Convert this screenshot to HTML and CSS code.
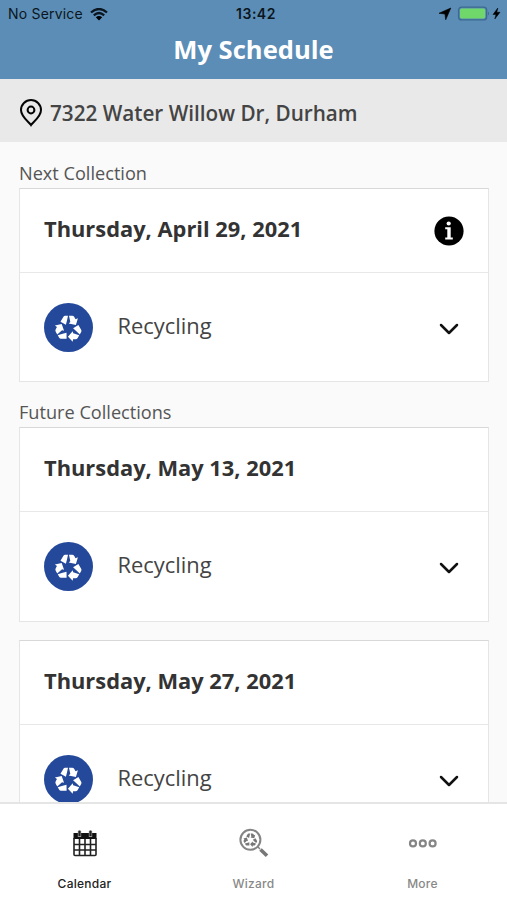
FILE: index.html
```html
<!DOCTYPE html>
<html lang="en">
<head>
<meta charset="utf-8">
<title>My Schedule</title>
<link rel="stylesheet" href="styles.css">
</head>
<body>
<svg class="defs" aria-hidden="true">
  <defs>
    <g id="arrow"><path d="M-8-5.8-5.2-10.6Q-4.6-11.7-3.4-11.7H-.5L-1.4-7.6-2.6-2.8Z"/><path d="M.5-11.7H3.6Q5-11.7 5.8-10.4L7-8.3 9.4-9.3 7.4-2.6 .2-4 1.8-5.4Z"/></g>
    <g id="recycle"><use href="#arrow"/><use href="#arrow" transform="rotate(120 0 1)"/><use href="#arrow" transform="rotate(240 0 1)"/></g>
  </defs>
</svg>
<div class="app">
  <header class="header">
    <div class="status">
      <div class="carrier"><span>No Service</span>
        <svg width="18" height="13" viewBox="0 0 18 13"><path d="M1 4.5Q9-2.5 17 4.5M3.8 7.3Q9 2.8 14.2 7.3" fill="none" stroke="#0b1620" stroke-width="2.3"/><path d="M5.8 9.3Q9 6.7 12.2 9.3L9 12.5Z"/></svg>
      </div>
      <div class="time">13:42</div>
      <div class="power">
        <svg width="62" height="16" viewBox="0 0 62 16"><path d="M0 7.3 11.8 2 6.7 13.8 6 8Z" stroke="#000" stroke-width=".6"/><rect x="19.6" y="1.1" width="28" height="12.8" rx="3" fill="none" stroke="#3d688f" stroke-width="1.3"/><rect x="21" y="2.5" width="25.2" height="10" rx="1.7" fill="#70d86b"/><path d="M49 5.5q2 2 0 4z" fill="#3d688f"/><path d="M58.8 2 54 8.5H57L55.8 13 61 6.3H57.8Z" stroke="#000" stroke-width=".5"/></svg>
      </div>
    </div>
    <h1>My Schedule</h1>
  </header>
  <div class="address">
    <svg width="24" height="28" viewBox="0 0 24 28" fill="none" stroke="#050505" stroke-width="2"><path d="M12 26C10.5 23.5 2 18 2 11A10 10 0 0 1 22 11C22 18 13.5 23.5 12 26Z"/><circle cx="12" cy="11" r="3.4"/></svg>
    <span>7322 Water Willow Dr, Durham</span>
  </div>
  <main class="content">
    <h2>Next Collection</h2>
    <section class="card">
      <div class="date"><span>Thursday, April 29, 2021</span>
        <svg class="info" width="30" height="30" viewBox="0 0 30 30"><circle cx="15" cy="15" r="14.6"/><circle cx="14.7" cy="7.5" r="2.1" fill="#fff"/><path d="M11.2 11.2H16.7V21.5H18.8V23.6H11.2V21.5H13.3V13.3H11.2Z" fill="#fff"/></svg>
      </div>
      <div class="item"><svg class="badge" viewBox="-24.5 -24.5 49 49"><circle r="24.5" fill="#24499b"/><use href="#recycle" fill="#fff"/></svg><span>Recycling</span><svg class="chevron" viewBox="0 0 20 12"><path d="M2 2 10 10 18 2"/></svg></div>
    </section>
    <h2 class="future">Future Collections</h2>
    <section class="card tall">
      <div class="date"><span>Thursday, May 13, 2021</span></div>
      <div class="item"><svg class="badge" viewBox="-24.5 -24.5 49 49"><circle r="24.5" fill="#24499b"/><use href="#recycle" fill="#fff"/></svg><span>Recycling</span><svg class="chevron" viewBox="0 0 20 12"><path d="M2 2 10 10 18 2"/></svg></div>
    </section>
    <section class="card last">
      <div class="date"><span>Thursday, May 27, 2021</span></div>
      <div class="item"><svg class="badge" viewBox="-24.5 -24.5 49 49"><circle r="24.5" fill="#24499b"/><use href="#recycle" fill="#fff"/></svg><span>Recycling</span><svg class="chevron" viewBox="0 0 20 12"><path d="M2 2 10 10 18 2"/></svg></div>
    </section>
  </main>
  <nav class="tabs">
    <div class="tab active">
      <svg width="32" height="32" viewBox="0 0 32 32"><path d="M4.5 6H27.5V12H4.5Z" fill="#111"/><path d="M5 11V27.5Q5 28.5 6 28.5H26Q27 28.5 27 27.5V11M5 17.5H27M5 23H27M10.5 12V28M16 12V28M21.5 12V28" fill="none" stroke="#222" stroke-width="1.6"/><path d="M10.5 4V10M21.5 4V10" stroke="#999" stroke-width="3.4"/><path d="M10.5 3.5V9M21.5 3.5V9" stroke="#222" stroke-width="2"/></svg>
      <span>Calendar</span>
    </div>
    <div class="tab">
      <svg width="32" height="32" viewBox="0 0 32 32"><circle cx="12.4" cy="12.8" r="10" fill="none" stroke="#858585" stroke-width="2"/><use href="#recycle" transform="translate(12.4 12.5) scale(.52)" fill="#777"/><path d="M22.5 22.5 29 28.7" stroke="#777" stroke-width="3.6"/><path d="M19.8 19.7 22 22" stroke="#858585" stroke-width="1.5"/></svg>
      <span>Wizard</span>
    </div>
    <div class="tab">
      <svg width="32" height="32" viewBox="0 0 32 32" fill="none" stroke="#858585" stroke-width="2.2"><circle cx="6" cy="16.4" r="3"/><circle cx="15.8" cy="16.4" r="3"/><circle cx="25.6" cy="16.4" r="3"/></svg>
      <span>More</span>
    </div>
  </nav>
</div>
</body>
</html>
```
FILE: styles.css
```css
* { box-sizing: border-box; }
body { margin: 0; font-family: "Open Sans", "Noto Sans", sans-serif; color: #333; }
.defs { position: absolute; width: 0; height: 0; }
svg { display: block; flex: none; }
.app { height: 900px; display: flex; flex-direction: column; overflow: hidden; background: #fafafa; }
.header { flex: none; height: 79px; background: #5b8db6; }
.status { display: grid; grid-template-columns: 1fr auto 1fr; align-items: center; height: 28px; padding: 0 6px 0 8px; font: 14px/28px Inter, sans-serif; color: #0b1620; }
.carrier { display: flex; align-items: center; gap: 7px; letter-spacing: .2px; }
.time { font-weight: 600; letter-spacing: .5px; padding-left: 3px; }
.power { display: flex; justify-content: flex-end; }
h1 { margin: 4px 0 0; text-align: center; color: #fff; font-size: 25.6px; line-height: 36px; font-weight: 700; }
.address { flex: none; height: 63px; display: flex; align-items: center; gap: 7px; padding: 4px 19px 0; background: #e9e9e9; font-size: 20.7px; font-weight: 600; color: #444; }
.content { flex: 1; min-height: 0; overflow: hidden; padding: 18px 18px 0 19px; }
h2 { margin: 0; height: 28px; font-size: 18.15px; line-height: 26px; font-weight: 400; color: #555; }
.future { margin-top: 17px; }
.card { display: flex; flex-direction: column; height: 194px; border: 1px solid #e5e5e5; border-top-color: #d8d8d8; background: #fff; }
.tall { height: 195px; }
.last { margin-top: 18px; }
.date { flex: none; height: 84px; display: flex; align-items: center; justify-content: space-between; padding: 0 24px; border-bottom: 1px solid #e8e8e8; font-size: 21.85px; font-weight: 700; color: #333; }
.date span { margin-top: -5px; }
.info { margin-top: 1px; }
.item { flex: 1; display: flex; align-items: center; padding: 0 29px 0 24px; font-size: 21.9px; color: #444; }
.item span { flex: 1; margin: -4px 0 0 24.5px; }
.badge { width: 49px; height: 49px; }
.chevron { width: 20px; height: 12px; margin-top: 3px; fill: none; stroke: #111; stroke-width: 2.5; stroke-linecap: round; stroke-linejoin: round; }
.tabs { flex: none; height: 98px; display: grid; grid-template-columns: repeat(3, 1fr); border-top: 2px solid #e5e5e5; background: #fff; }
.tab { display: flex; flex-direction: column; align-items: center; padding-top: 23px; font: 500 12px/16px Inter, sans-serif; letter-spacing: .25px; color: #888; }
.tab span { margin-top: 17px; }
.active { color: #222; }
```
